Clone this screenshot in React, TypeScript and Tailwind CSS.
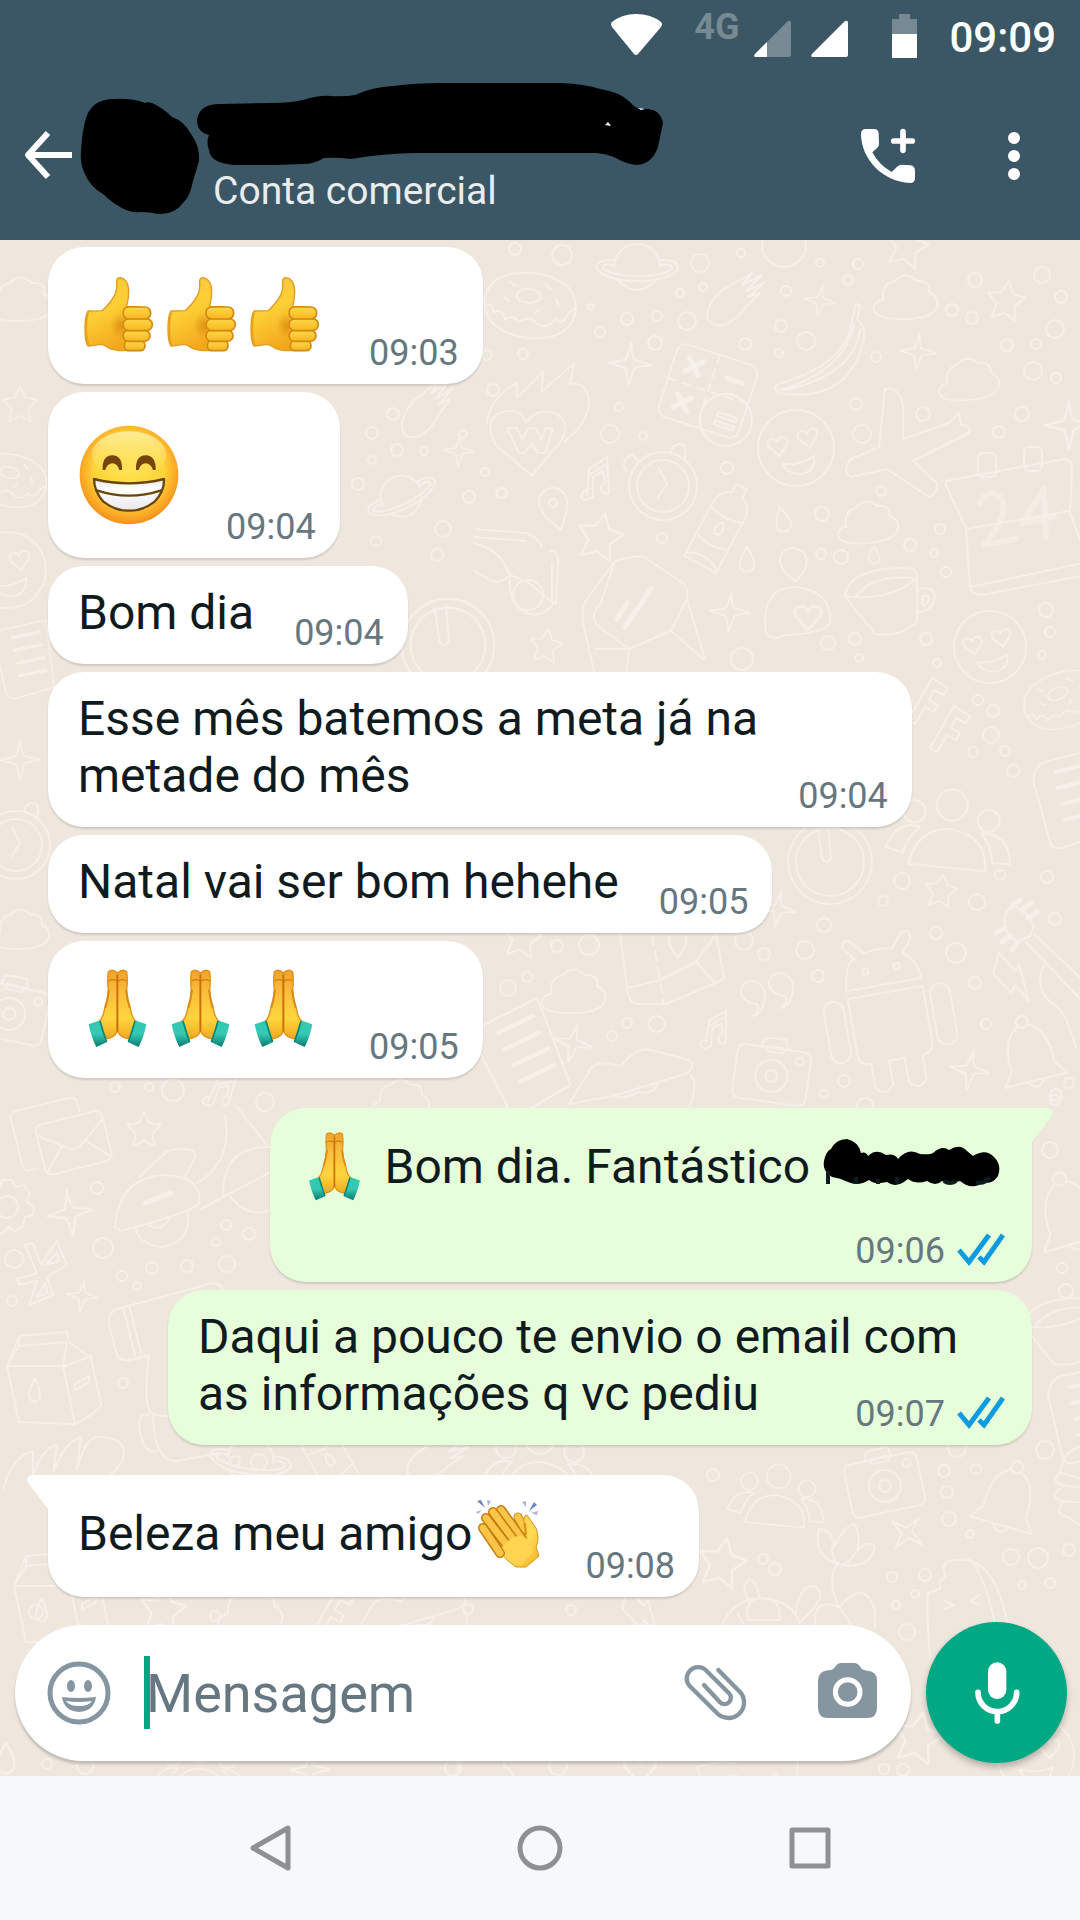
import type { ReactNode } from "react";

type Doodle = [kind: string, x: number, y: number, rotation: number, scale: number];

const STAR = "M0 -20 L6 -8 L19 -6 L9 4 L12 18 L0 12 L-12 18 L-9 4 L-19 -6 L-6 -8 Z";
const SPARKLE = "M0 -20 Q2 -4 4 -4 Q16 -2 20 0 Q6 2 4 4 Q2 14 0 20 Q-3 6 -4 4 Q-14 2 -20 0 Q-6 -3 -4 -4 Q-2 -10 0 -20 Z";
const HEART = "M0 10 L-9 0 Q-12 -7 -6 -8 Q-2 -9 0 -4 Q2 -9 6 -8 Q12 -7 9 0 Z";

const SHAPES: Record<string, ReactNode> = {
  star: <path d={STAR} />,
  sparkle: <path d={SPARKLE} />,
  heart: <path d={HEART} />,
  cloud: <path d="M-22 2 Q-24 -14 -10 -17 Q0 -28 12 -17 Q26 -18 24 -6 Q36 0 31 11 Q24 22 -8 21 Q-34 20 -31 8 Q-29 3 -22 2 Z" />,
  planet: (
    <>
      <path d="M-23 -2 A23 23 0 0 1 23 -2 M-20 10 Q0 32 20 10" />
      <path d="M-23 -9 Q-42 -10 -40 0 Q-30 12 0 12 Q32 12 41 0 Q42 -10 23 -9" />
      <path d="M-24 -4 Q-36 -6 -34 0 Q-22 7 0 7 Q26 7 35 0 Q36 -6 24 -4" />
    </>
  ),
  donut: (
    <>
      <path d="M-46 0 Q-44 -32 0 -32 Q44 -30 46 0 Q44 34 0 33 Q-42 30 -46 0 Z" />
      <path d="M-44 4 Q-38 -2 -36 10 Q-28 4 -24 16 Q-16 10 -10 18 Q0 10 8 18 Q18 24 26 12 Q34 20 38 6 L45 0" />
      <ellipse cx="-2" cy="-9" rx="12" ry="7" />
      <path d="M-22 -22 l6 4 M14 -22 l6 5 M26 -8 l2 7 M-26 -6 l5 4 M10 4 l-5 4" />
    </>
  ),
  mitten: <path d="M-30 18 Q-34 4 -14 -12 L14 -28 L4 -16 L24 -26 L8 -10 L26 -18 L10 -4 L22 -8 L8 6 Q-8 26 -20 24 Q-28 23 -30 18 Z" />,
  banana: (
    <>
      <path d="M36 -46 L32 -30 Q28 14 -42 34 Q-48 38 -42 43 Q30 54 44 -12 Q46 -24 37 -30 L40 -45 Z" />
      <path d="M34 -26 Q24 22 -40 40 M40 -20 Q34 24 -34 40" />
    </>
  ),
  flameHeart: (
    <>
      <path d="M0 46 L-38 14 Q-54 -18 -26 -22 Q-12 -24 -6 -10 Q4 -26 24 -20 Q42 -10 30 10 Z" />
      <path d="M-48 -8 Q-44 -36 -16 -52 L-16 -36 L12 -64 L10 -42 L44 -72 L40 -50 Q60 -54 60 -28 Q56 -6 34 10" />
      <path d="M-26 -4 L-16 -4 L-10 8 L-4 -4 L4 -4 L10 8 L14 -4 L22 -4 L14 22 L6 22 L0 12 L-8 22 L-14 22 Z" />
    </>
  ),
  calculator: (
    <>
      <rect x="-42" y="-38" width="84" height="76" rx="9" />
      <path d="M0 -38 v76 M-42 0 h84" strokeDasharray="8 7" />
      <path d="M-28 -26 l14 14 M-14 -26 l-14 14 M-28 12 l14 14 M-14 12 l-14 14 M14 -18 h16" strokeWidth="5" />
      <circle cx="26" cy="22" r="26" />
      <path d="M16 17 h20 v4 h-20 z M16 26 h20 v4 h-20 z" />
    </>
  ),
  smiley: (
    <>
      <circle r="38" />
      <path d={HEART} transform="translate(-18 -2) rotate(-10)" />
      <path d={HEART} transform="translate(12 -10) rotate(-10)" />
      <path d="M-14 16 Q4 18 18 8 Q20 24 4 26 Q-8 26 -14 16 Z" />
    </>
  ),
  plane: (
    <path d="M-20 -56 Q-4 -58 -2 -38 L-2 -6 L44 -22 L54 -32 L56 -20 Q66 -20 64 -12 L8 16 L32 38 Q32 50 24 52 L-18 24 L-54 32 Q-64 26 -54 14 L-26 2 Z" />
  ),
  calendar: (
    <>
      <path d="M-66 -42 L52 -64 Q60 -64 60 -54 L58 -10 L76 38 L74 52 L-30 72 Q-40 72 -42 64 L-46 6 L-66 -38 Z" />
      <path d="M-46 6 L58 -12 M-42 64 L72 40" />
      <rect x="-34" y="-70" width="18" height="24" rx="5" />
      <rect x="12" y="-76" width="18" height="24" rx="5" />
      <path d="M-32 -20 Q-24 -36 -12 -26 Q0 -12 -28 22 L4 16 M34 14 L32 -34 L10 0 L42 -6" strokeWidth="6" opacity="0.6" />
    </>
  ),
  alarm: (
    <>
      <circle r="34" />
      <circle r="26" />
      <path d="M-4 -18 L4 -2 L-5 12 M-36 -14 Q-44 -26 -30 -32 L-24 -24 M8 -34 Q12 -46 22 -40 L22 -28" />
    </>
  ),
  dial: (
    <>
      <circle r="42" />
      <circle r="34" />
      <path d="M-12 -34 L-8 -4 Q-4 4 1 -4 L-2 -36" />
    </>
  ),
  note: (
    <path d="M-8 16 L-6 -10 L12 -22 L14 14 Q8 16 6 10 Q6 4 10 4 L8 -8 L-2 -2 L-2 18 Q-10 24 -14 18 Q-12 10 -8 12 M-6 -4 L10 -14" />
  ),
  pin: (
    <>
      <path d="M8 22 Q-14 6 -14 -6 A14 14 0 0 1 14 -6 Q14 6 8 22 Z" />
      <circle cy="-5" r="4" />
    </>
  ),
  bottle: (
    <>
      <path d="M-18 40 L-18 -22 Q-16 -36 -6 -38 L-6 -48 L6 -48 L6 -38 Q16 -36 18 -22 L18 40 Z M-18 -16 Q0 -10 18 -16 M-18 14 Q0 22 18 14 M-18 36 Q0 26 18 38" />
      <path d="M0 -8 Q-8 4 0 6 Q8 4 0 -8 Z" />
    </>
  ),
  drop: <path d="M0 -14 Q-10 2 -6 8 Q0 14 6 8 Q10 2 0 -14 Z" />,
  glasses: (
    <>
      <path d="M-44 -44 L8 -40 Q20 -36 24 -26 M-44 -36 L8 -32 M32 -22 Q40 -24 40 -10 L38 30 L34 30 L34 -10" />
      <path d="M-44 -30 Q-18 -24 -8 2 Q-14 10 -26 8 L-44 -2 M-8 2 L8 8 L36 30 Q24 46 8 40 Q-10 30 -8 6" />
      <circle cx="10" cy="22" r="15" />
    </>
  ),
  letter: (
    <>
      <path d="M-26 -54 Q0 -62 6 -56 L42 -32 Q48 -26 46 -16 L30 16 L6 26 L-12 34 L-44 10 Q-52 0 -40 -12 Z" />
      <path d="M-26 -54 L-54 -16 Q-60 -8 -58 8 L-44 70 M-46 34 L-12 34 M46 -16 L64 44 M30 16 L62 44 M-12 34 L-16 70" />
      <path d="M-16 12 L10 -26 M-24 4 L-14 -12" strokeWidth="5" />
    </>
  ),
  hug: (
    <>
      <path d="M0 -26 Q-22 -40 -14 -54 Q-4 -64 8 -54 Q16 -42 0 -26 Z" />
      <path d="M-30 26 Q-36 -20 0 -20 Q36 -16 34 16 Q30 26 -10 28 Q-26 34 -30 26 Z" />
      <path d={HEART} transform="translate(12 10) scale(1.3)" />
    </>
  ),
  cup: (
    <>
      <path d="M-44 -4 Q-40 -32 14 -32 Q28 -32 28 -24 L28 22 Q10 38 -14 34 Z M-44 -4 Q0 2 28 -22 M-34 -2 Q-18 -26 24 -22" />
      <path d="M28 -10 Q44 -16 46 -4 Q44 12 28 12 M34 -4 Q40 -6 40 -1 Q38 6 33 5 Z" />
    </>
  ),
  type: <path d="M-16 20 L8 -22 L24 -12 L20 -5 L10 -10 L5 0 L14 5 L10 12 L1 7 L-9 24 Z" />,
  people: (
    <>
      <circle cy="-30" r="14" />
      <circle cx="-34" cy="-22" r="10" />
      <circle cx="34" cy="-18" r="10" />
      <path d="M-36 26 Q-30 -8 0 -8 Q34 -4 34 28 Z M-42 16 L-58 12 Q-48 -14 -28 -8 Q-38 0 -42 16 M40 20 L56 20 Q54 -8 28 -6 Q38 4 40 20" />
    </>
  ),
  book: (
    <>
      <path d="M-14 -38 L40 -50 L50 34 L2 48 Q-8 50 -10 40 L-24 -20 Q-22 -34 -14 -38 Z" />
      <path d="M-2 -28 l34 -7 M0 -12 l34 -7 M4 4 l34 -7 M6 20 l34 -7" strokeWidth="4" />
    </>
  ),
  map: (
    <>
      <path d="M-54 -36 L-46 24 Q-44 34 -36 34 L-8 34 L44 12 L50 8 L42 -36 M-46 18 L-14 10 L22 -8 L42 -36 M22 -8 L40 12" />
      <path d="M-22 -34 L-10 32" strokeDasharray="10 6" />
      <path d="M4 -12 Q-8 -26 -4 -34 M4 -12 Q14 -26 12 -34" />
    </>
  ),
  quote: <path d="M0 16 Q8 10 4 4 Q-12 2 -12 -10 Q-8 -22 4 -18 Q16 -10 10 6 Q8 14 0 16 Z" />,
  camera: (
    <>
      <rect x="-37" y="-24" width="74" height="54" rx="7" />
      <path d="M-14 -24 L-12 -32 Q-10 -34 10 -34 L13 -24" />
      <rect x="-9" y="-25" width="18" height="5" rx="2" />
      <circle cy="4" r="16" />
      <circle cy="4" r="6" />
      <circle cx="26" cy="-14" r="4" />
    </>
  ),
  lips: <path d="M-62 26 L-40 -10 Q-34 -18 -10 -12 Q6 -32 20 -28 L58 -18 Q66 -12 54 -4 L-18 18 Z M-18 16 Q-12 24 8 14 Q22 18 28 4 M60 -2 Q68 4 58 30" />,
  android: (
    <>
      <path d="M-38 -42 Q-34 -72 -24 -72 L-34 -84 Q-34 -94 -26 -90 L-14 -76 Q0 -80 14 -76 L26 -90 Q36 -94 34 -82 L24 -70 Q38 -60 38 -42 Z" />
      <path d="M-38 -34 H38 V24 Q36 34 26 34 V58 Q18 70 8 58 V34 H-8 V58 Q-18 70 -26 58 V34 Q-38 34 -38 24 Z" />
      <rect x="-64" y="-34" width="20" height="62" rx="10" />
      <rect x="44" y="-34" width="20" height="62" rx="10" />
      <circle cx="-16" cy="-58" r="3" />
      <circle cx="16" cy="-58" r="3" />
    </>
  ),
  bolt: <path d="M-12 -24 L4 -6 L8 -12 L18 24 L4 8 L0 16 L-18 -4 Z" />,
  guitar: (
    <>
      <path d="M-30 -28 Q-36 -8 -18 2 L-6 -4 L-2 -14 Q-8 -28 -22 -34 Z M-10 2 L70 86 M-2 -6 L70 62 M8 26 Q-4 50 20 66 Q32 76 40 108" />
      <path d="M-24 -34 l8 -6 M-14 -30 l9 -7 M-8 -22 l9 -6 M-32 -12 l-8 5 M-26 -4 l-8 6 M-18 2 l-6 8" strokeWidth="5" />
    </>
  ),
  bell: (
    <>
      <circle cy="-34" r="6" />
      <path d="M-6 -30 Q-24 -20 -22 12 L-32 26 L32 26 L22 12 Q24 -20 6 -30 M-8 27 Q0 38 8 27" />
    </>
  ),
  mail: (
    <>
      <rect x="-36" y="-24" width="72" height="54" rx="7" />
      <path d="M-36 -14 L-6 8 Q0 11 6 8 L36 -14 M-34 26 L-13 4 M34 26 L13 4" />
      <path d="M-42 20 L-52 20 Q-58 20 -58 12 L-58 -38 Q-58 -44 -50 -44 L6 -44 Q14 -44 14 -36 L14 -28" />
    </>
  ),
  gear: (
    <>
      <circle r="11" />
      <path d="M-5 -27 H5 L8 -20 L17 -22 L23 -13 L19 -6 L27 0 L26 8 L18 10 L16 19 L8 25 L2 20 L-5 27 L-14 23 L-15 14 L-24 10 L-26 0 L-19 -6 L-22 -15 L-14 -21 L-8 -18 Z" />
    </>
  ),
  scooter: (
    <>
      <path d="M-42 30 Q-38 -20 8 -22 Q46 -20 42 6 Q38 14 -36 34 Z M-18 -20 L10 -46 Q40 -52 38 -40 L28 -20 M40 -14 Q76 -34 68 -82 M80 -90 L110 -52 M44 12 L66 0 Q64 -50 112 -50 M66 0 L112 -24" />
      <path d="M-22 31 A26 26 0 0 0 30 14 M-8 28 Q4 36 14 20 M74 0 Q88 20 112 14" />
      <path d="M-12 6 L14 -4" strokeWidth="5" />
    </>
  ),
  blades: <path d="M-10 -30 L-2 -8 L14 -32 L24 -8 L4 4 L10 22 L-14 32 L-6 8 L-24 12 L-26 6 L-6 0 L-18 -28 Z M2 -8 L14 -20 L16 -12 Z M-6 24 L2 10 L4 20 Z" />,
  milk: (
    <>
      <path d="M-34 -44 L14 -48 L16 -38 L38 -22 L48 24 Q46 32 22 44 L-34 42 L-46 -14 Z M-34 -44 L-34 -34 L14 -38 M-34 -34 L-46 -14 L12 -14 L38 -24 M14 -38 L10 -14 L22 44" />
      <path d="M-18 -2 Q-30 20 -18 22 Q-8 20 -18 -2 Z M22 4 L36 -4 L36 2 L22 10 Z" />
    </>
  ),
  bread: <path d="M-60 34 Q-50 0 -30 -4 L-30 20 Q-20 -8 -6 -10 L-10 18 Q2 -14 18 -18 L14 14 Q22 -16 34 -18 Q66 -18 60 4 Q50 24 20 34" />,
  cart: (
    <path d="M-24 -8 Q-26 -20 -16 -24 L80 -50 Q92 -48 90 -38 M-24 -8 L-16 22 Q-12 30 2 26 L16 22 M-10 -26 L2 22 M-4 -28 L8 20 M16 22 Q8 84 24 82 L40 84 M16 82 Q2 78 8 104 Q12 120 24 118 M20 84 Q22 130 44 128 L86 120" />
  ),
  plant: (
    <path d="M-4 30 Q-18 0 -4 -14 Q-30 -18 -24 -48 Q-12 -48 -8 -32 Q4 -54 12 -52 Q18 -40 14 -26 Q26 -38 32 -30 Q28 -8 -2 -12 M-6 -12 Q-16 -30 -6 -34 M14 -26 Q6 -14 -2 -12 M-4 30 Q-30 20 -28 48 M-4 30 Q22 0 32 34 L32 50 M-4 30 L10 50" />
  ),
  turtle: (
    <path d="M-40 28 Q-36 -6 0 -10 Q40 -8 42 28 M-22 6 L-10 28 M0 -10 Q-16 -8 -12 12 L20 12 Q20 -4 12 -8 M-12 -8 L-16 -20 Q-10 -36 -4 -22 L0 -10 M36 6 Q38 -22 54 -22 Q68 -14 50 4 L40 14" />
  ),
  popsicle: (
    <path d="M-40 60 Q-44 10 -42 -4 L-30 -8 Q-32 -18 -24 -20 Q-30 -34 -20 -36 Q24 -48 38 30 M-4 -38 Q10 -38 26 30 M-26 4 L-16 8 L-26 12 M10 -2 L0 4 L10 8" />
  ),
  burger: (
    <path d="M30 -44 Q-10 -40 -12 -12 L20 -4 M-12 -12 Q-22 -4 -10 0 L20 4 M-12 4 Q-24 12 -10 16 L20 18 M-10 18 Q-18 30 -4 32 L16 46" />
  ),
};

const DOODLES: Doodle[] = [
  ["planet", 637, 269, 0, 1], ["donut", 530, 305, 4, 1], ["mitten", 738, 301, 0, 1], ["sparkle", 820, 301, 10, 0.8],
  ["sparkle", 630, 364, 4, 1.05], ["sparkle", 918, 352, 5, 0.9], ["banana", 820, 350, 0, 1], ["cloud", 905, 298, 0, 1],
  ["cloud", 968, 380, -4, 0.95], ["cloud", 867, 523, -4, 0.95], ["star", 1006, 301, 8, 1], ["star", 907, 246, 14, 1.1],
  ["star", 600, 537, 12, 1.2], ["star", 546, 646, 8, 0.85], ["flameHeart", 532, 432, 0, 0.95], ["calculator", 708, 391, 18, 1],
  ["smiley", 796, 448, 0, 1], ["smiley", 990, 647, 0, 0.95], ["plane", 905, 445, 0, 1], ["calendar", 1012, 523, 0, 1],
  ["alarm", 663, 486, 0, 1], ["note", 595, 479, 0, 1], ["pin", 553, 508, 0, 1], ["bottle", 719, 529, 28, 1],
  ["drop", 783, 521, -14, 1], ["drop", 747, 561, 0, 1], ["drop", 874, 556, 0, 0.7], ["glasses", 518, 573, 0, 1],
  ["letter", 641, 615, 0, 1], ["sparkle", 730, 612, 4, 1], ["hug", 796, 607, 0, 1], ["cup", 889, 600, 0, 1],
  ["type", 924, 700, 0, 1], ["type", 946, 728, 0, 1], ["donut", 1062, 700, -22, 0.85], ["sparkle", 1069, 425, 0, 1.2],
  ["people", 950, 838, 4, 1.1], ["book", 1058, 800, -2, 1], ["dial", 830, 862, 0, 1], ["star", 941, 891, 8, 0.85],
  ["cloud", 573, 992, 0, 1], ["map", 674, 970, 0, 1], ["quote", 753, 1000, 0, 1], ["quote", 781, 992, 0, 1],
  ["note", 714, 1030, 4, 0.9], ["camera", 772, 1072, 8, 1], ["lips", 631, 1078, 0, 1], ["android", 891, 1026, -10, 1],
  ["bolt", 1011, 977, 0, 1], ["guitar", 1036, 940, 0, 1], ["bell", 1030, 1055, -14, 1], ["sparkle", 573, 1043, 14, 1],
  ["sparkle", 970, 1070, 10, 1], ["sparkle", 778, 909, 10, 0.9], ["mail", 73, 1140, -14, 0.95], ["star", 144, 1130, 0, 0.9],
  ["gear", 7, 1207, 0, 1], ["sparkle", 70, 1213, -8, 1.15], ["sparkle", 82, 1296, 8, 0.8], ["scooter", 157, 1197, 0, 1],
  ["blades", 43, 1273, 0, 1], ["milk", 53, 1380, 0, 1], ["bread", 63, 1455, 0, 1], ["cart", 133, 1333, 0, 1],
  ["people", 777, 1502, 4, 0.85], ["camera", 884, 1482, -12, 1], ["bell", 1008, 1500, 16, 1], ["sparkle", 907, 1533, 38, 0.95],
  ["star", 722, 1563, 12, 1.25], ["plant", 843, 1577, 0, 1], ["turtle", 760, 1608, 0, 1], ["popsicle", 970, 1597, 0, 1],
  ["burger", 1072, 1485, 0, 1], ["bell", 1070, 1215, -16, 1.1], ["cup", 1068, 1330, 0, 1], ["book", 1072, 1415, 0, 1],
  ["mitten", 430, 410, -10, 1], ["planet", 402, 498, -26, 0.9], ["sparkle", 459, 451, 4, 0.8],
  ["dial", 448, 645, 0, 1.1], ["cloud", 20, 300, 0, 1], ["star", 20, 405, 0, 0.9],
  ["donut", 10, 480, 10, 0.8], ["smiley", 8, 570, 0, 1], ["book", 14, 660, 0, 0.8], ["sparkle", 20, 760, 0, 1],
  ["alarm", 16, 845, 0, 1], ["cloud", 20, 930, 0, 0.9], ["camera", 10, 1010, 12, 1], ["book", 508, 1062, -14, 1.1],
  ["star", 522, 938, 10, 1], ["bottle", 330, 1460, -30, 1], ["mitten", 440, 1460, 10, 1], ["people", 540, 1470, 0, 1],
  ["planet", 250, 1462, 8, 1], ["star", 163, 1610, 8, 1.2], ["cloud", 250, 1612, 0, 1], ["type", 330, 1610, 0, 1],
  ["lips", 410, 1612, 0, 0.9], ["bolt", 640, 1612, 0, 1], ["milk", 60, 1600, 0, 1], ["star", 918, 1738, 12, 1.3],
  ["smiley", 1036, 1756, 10, 1], ["people", 200, 1775, 0, 0.8], ["sparkle", 310, 1770, 0, 1], ["heart", 640, 1768, 0, 1.6],
  ["calendar", 750, 1800, 0, 0.8], ["cloud", 480, 1772, 0, 1], ["drop", 6, 1760, 0, 1.2], ["cloud", 400, 1100, 0, 0.9],
  ["note", 220, 1090, 20, 0.9],
];

const DOTS: [number, number, number][] = [
  [515, 249, 6], [562, 255, 10], [700, 263, 9], [741, 253, 4], [784, 245, 22], [820, 263, 4], [858, 264, 5], [848, 280, 5],
  [680, 293, 4], [703, 287, 4], [786, 291, 5], [591, 307, 3], [627, 319, 6], [657, 316, 5], [687, 321, 9], [600, 332, 5],
  [655, 343, 7], [745, 344, 6], [781, 326, 6], [806, 341, 9], [779, 353, 4], [952, 310, 6], [972, 318, 6], [975, 280, 7],
  [1042, 275, 8], [1061, 297, 6], [1055, 329, 9], [1007, 345, 6], [1036, 344, 5], [1033, 371, 9], [1056, 378, 5], [876, 357, 5],
  [523, 354, 5], [619, 407, 4], [610, 434, 9], [643, 436, 4], [727, 468, 6], [856, 404, 6], [862, 434, 9], [923, 414, 7],
  [1022, 414, 7], [999, 432, 6], [502, 493, 5], [662, 538, 5], [822, 514, 7], [881, 491, 5], [940, 529, 5], [910, 545, 6],
  [821, 554, 5], [841, 557, 7], [934, 553, 4], [946, 572, 5], [828, 643, 7], [855, 639, 6], [859, 658, 4], [926, 639, 6],
  [937, 663, 4], [1046, 610, 7], [1050, 632, 5], [1042, 655, 4], [742, 659, 11], [978, 700, 5], [993, 711, 6], [991, 735, 8],
  [973, 752, 5], [1005, 751, 5], [1013, 771, 6], [902, 881, 8], [883, 901, 5], [977, 902, 8], [1000, 875, 5], [1047, 877, 6],
  [1055, 919, 6], [824, 925, 7], [805, 950, 9], [818, 976, 6], [744, 941, 9], [764, 954, 6], [936, 933, 6], [956, 953, 10],
  [975, 983, 6], [589, 945, 10], [557, 946, 6], [612, 1036, 5], [627, 1023, 5], [657, 1024, 8], [986, 1024, 5], [824, 1094, 4],
  [844, 1081, 6], [865, 1106, 8], [1056, 1095, 6], [1069, 1083, 5], [508, 988, 8], [527, 977, 5], [115, 1087, 5], [149, 1087, 4],
  [173, 1090, 11], [265, 1102, 9], [97, 1188, 6], [103, 1248, 10], [14, 1259, 9], [12, 1301, 5], [122, 1276, 5], [137, 1286, 4],
  [152, 1268, 6], [187, 1266, 6], [227, 1264, 8], [216, 1242, 4], [226, 1225, 5], [249, 1234, 6], [123, 1383, 5], [235, 1461, 5],
  [259, 1462, 8], [1055, 1100, 5], [1050, 1150, 8], [1062, 1268, 5], [1066, 1291, 7], [957, 1448, 9], [1045, 1450, 9], [944, 1471, 6],
  [976, 1469, 5], [947, 1492, 6], [949, 1519, 7], [970, 1534, 4], [1011, 1557, 8], [1038, 1558, 10], [1069, 1550, 6], [1050, 1583, 5],
  [1022, 1585, 4], [925, 1575, 6], [892, 1577, 5], [915, 1594, 4], [896, 1605, 4], [907, 1632, 8], [763, 1559, 5], [775, 1569, 6],
  [713, 1475, 6], [36, 1612, 7], [215, 1616, 5], [468, 1609, 5], [571, 1610, 5], [47, 1764, 5], [85, 1766, 8], [884, 1769, 5],
  [903, 1770, 6], [558, 1766, 9], [453, 1768, 8], [393, 414, 6], [372, 433, 6], [463, 434, 4], [397, 450, 6], [424, 451, 4],
  [372, 460, 4], [485, 472, 4], [358, 484, 6], [469, 497, 6], [501, 493, 5], [443, 529, 8], [376, 541, 5], [437, 555, 6],
  [487, 355, 5], [493, 390, 6],
];

function Wallpaper() {
  return (
    <svg className="absolute inset-0 h-full w-full" viewBox="0 240 1080 1536" preserveAspectRatio="xMinYMin slice" aria-hidden="true">
      <g fill="none" stroke="#f6f0ea" strokeWidth="2" strokeLinejoin="round" strokeLinecap="round">
        {DOODLES.map(([kind, x, y, rotation, scale], i) => (
          <g key={i} transform={`translate(${x} ${y}) rotate(${rotation}) scale(${scale})`}>
            {SHAPES[kind]}
          </g>
        ))}
        {DOTS.map(([cx, cy, r], i) => (
          <circle key={i} cx={cx} cy={cy} r={r} />
        ))}
      </g>
    </svg>
  );
}

function ThumbsUp() {
  return (
    <svg className="size-[83px]" viewBox="105 98 249 249" role="img" aria-label="Polegar para cima">
      <defs>
        <linearGradient id="thumb-skin" x1="0" y1="0" x2="0.4" y2="1">
          <stop offset="0" stopColor="#f8c440" />
          <stop offset="0.5" stopColor="#fdcf36" />
          <stop offset="1" stopColor="#f3a81c" />
        </linearGradient>
        <radialGradient id="thumb-palm" cx="0.5" cy="0.5" r="0.5">
          <stop offset="0" stopColor="#d98a10" stopOpacity="0.75" />
          <stop offset="1" stopColor="#d98a10" stopOpacity="0" />
        </radialGradient>
        <linearGradient id="thumb-finger" x1="0" y1="0" x2="0" y2="1">
          <stop offset="0" stopColor="#ffd848" />
          <stop offset="1" stopColor="#f7b622" />
        </linearGradient>
      </defs>
      <path
        d="M141 212 Q132 226 132 264 Q132 306 141 317 Q162 315 178 312 Q188 312 200 321 Q216 331 250 331 L300 330 L300 200 L257 198 Q264 172 263 148 Q260 116 238 112 Q227 111 227 124 Q229 150 220 166 Q206 192 183 211 Q164 212 141 212 Z"
        fill="url(#thumb-skin)"
        stroke="#e19a25"
        strokeWidth="4"
      />
      <path d="M142 216 Q136 230 136 264 Q136 300 143 313" fill="none" stroke="#e7a11d" strokeWidth="5" />
      <ellipse cx="238" cy="256" rx="30" ry="40" fill="url(#thumb-palm)" />
      <g fill="url(#thumb-finger)" stroke="#d48a12" strokeWidth="5">
        <rect x="250" y="301" width="62" height="30" rx="14" />
        <rect x="246" y="270" width="81" height="33" rx="16" />
        <rect x="246" y="235" width="88" height="36" rx="18" />
        <rect x="246" y="200" width="83" height="36" rx="17" />
      </g>
    </svg>
  );
}

function Grin() {
  return (
    <svg className="size-[106px]" viewBox="110 545 318 318" role="img" aria-label="Rosto sorridente">
      <defs>
        <radialGradient id="grin-face" cx="0.5" cy="0.45" r="0.55">
          <stop offset="0" stopColor="#ffe14a" />
          <stop offset="0.65" stopColor="#fdd43a" />
          <stop offset="0.85" stopColor="#fbab26" />
          <stop offset="1" stopColor="#f4901d" />
        </radialGradient>
        <linearGradient id="grin-shine" x1="0" y1="0" x2="0" y2="1">
          <stop offset="0" stopColor="#fff3b0" stopOpacity="0.8" />
          <stop offset="1" stopColor="#ffe768" stopOpacity="0.1" />
        </linearGradient>
        <linearGradient id="grin-teeth" x1="0" y1="0" x2="0" y2="1">
          <stop offset="0" stopColor="#e3e3ea" />
          <stop offset="0.3" stopColor="#ffffff" />
          <stop offset="1" stopColor="#e8e8ee" />
        </linearGradient>
      </defs>
      <circle cx="269" cy="704" r="148" fill="url(#grin-face)" />
      <ellipse cx="269" cy="643" rx="112" ry="70" fill="url(#grin-shine)" />
      <path d="M190 689 Q188 646 219 645 Q250 646 248 689 L240 689 Q234 669 219 669 Q204 669 198 689 Z" fill="#76450d" />
      <path d="M290 689 Q288 646 319 645 Q350 646 349 689 L341 689 Q334 669 319 669 Q304 669 298 689 Z" fill="#76450d" />
      <path d="M164 716 Q269 742 374 716 Q376 752 346 784 Q310 812 269 811 Q228 812 192 784 Q164 752 164 716 Z" fill="url(#grin-teeth)" stroke="#694608" strokeWidth="7" strokeLinejoin="round" />
      <path d="M172 750 Q269 782 366 750" fill="none" stroke="#694608" strokeWidth="7" />
    </svg>
  );
}

function Pray({ className }: { className: string }) {
  return (
    <svg className={className} viewBox="110 108 249 249" role="img" aria-label="Mãos unidas">
      <defs>
        <linearGradient id="pray-skin" x1="0" y1="0" x2="0" y2="1">
          <stop offset="0" stopColor="#f0a22a" />
          <stop offset="0.35" stopColor="#fbc03b" />
          <stop offset="0.7" stopColor="#ffd53e" />
          <stop offset="1" stopColor="#f2a81e" />
        </linearGradient>
        <linearGradient id="pray-cuff" x1="0" y1="0" x2="0" y2="1">
          <stop offset="0" stopColor="#2fc8b0" />
          <stop offset="0.5" stopColor="#36c9b4" />
          <stop offset="1" stopColor="#067a70" />
        </linearGradient>
      </defs>
      {[1, -1].map((side) => (
        <g key={side} transform={side === 1 ? undefined : "translate(469 0) scale(-1 1)"}>
          <path d="M234 126 Q220 112 207 122 Q203 150 207 176 Q206 204 196 232 Q192 262 176 274 L196 324 Q226 322 234 301 Z" fill="url(#pray-skin)" stroke="#e0901b" strokeWidth="4" />
          <path d="M208 150 Q220 142 233 150" fill="none" stroke="#d07d12" strokeWidth="4" />
          <path d="M209 176 Q206 204 198 230" fill="none" stroke="#db8a18" strokeWidth="6" />
          <path d="M148 280 L179 269 Q190 296 202 334 L171 348 Q155 318 148 280 Z" fill="url(#pray-cuff)" />
          <path d="M182 270 Q190 300 202 333" fill="none" stroke="#05857a" strokeWidth="5" />
        </g>
      ))}
      <path d="M234 132 V302" stroke="#c96f0c" strokeWidth="5" />
    </svg>
  );
}

function Clap() {
  const fingers = ["M29 13 L50 42", "M21 15 L44 46", "M14 21 L38 52", "M11 31 L28 56"];
  return (
    <svg className="size-[73px]" viewBox="0 0 73 73" role="img" aria-label="Palmas">
      <defs>
        <linearGradient id="clap-skin" x1="0" y1="0" x2="1" y2="1">
          <stop offset="0" stopColor="#fbc64a" />
          <stop offset="0.6" stopColor="#ffda55" />
          <stop offset="1" stopColor="#f5b21d" />
        </linearGradient>
      </defs>
      <path d="M46 20 L58 44" stroke="#c9850f" strokeWidth="9" strokeLinecap="round" />
      <path d="M46 20 L58 44" stroke="#fbc64a" strokeWidth="7" strokeLinecap="round" />
      <path d="M24 50 L36 64 L44 70 L54 70 L67 59 L64 50 Q68 42 64 31 L55 18 Q51 18 52 27 L54 37 L40 30 Z" fill="url(#clap-skin)" stroke="#d9921a" strokeWidth="1" />
      {fingers.map((finger) => (
        <g key={finger} strokeLinecap="round">
          <path d={finger} stroke="#c47c0e" strokeWidth="10" />
          <path d={finger} stroke="#fbc548" strokeWidth="7" />
        </g>
      ))}
      <path d="M30 50 Q42 36 52 40 Q62 46 60 56 L50 67 Q42 68 36 61 Z" fill="#ffd450" />
      <path d="M53 26 L54 38" stroke="#d9921a" strokeWidth="2" />
      <g fill="#6f86bd">
        <path d="M5 4 L9 3 L13 11 Z" />
        <path d="M15 3 L19 4 L16 9 Z" opacity="0.6" />
        <path d="M4 15 L10 13 L6 17 Z" opacity="0.6" />
        <path d="M62 5 L65 8 L57 14 Z" />
        <path d="M50 5 L54 4 L54 10 Z" opacity="0.6" />
        <path d="M59 16 L66 14 L65 18 Z" opacity="0.6" />
      </g>
    </svg>
  );
}

function Ticks() {
  return (
    <svg className="h-[42px] w-[48px]" viewBox="0 0 48 42" fill="none" stroke="#0d9be0" strokeWidth="5" aria-label="Lida" role="img">
      <path d="M2 20 L12 32 L32 5 M22 27 L27 32 L46 5" />
    </svg>
  );
}

function Tail({ side }: { side: "left" | "right" }) {
  return side === "right" ? (
    <svg className="absolute top-0 left-full -ml-px h-[34px] w-[23px]" viewBox="0 0 23 34" aria-hidden="true">
      <path d="M0 0 H16 Q25 1 20 9 L1 34 H0 Z" fill="#e6ffda" />
    </svg>
  ) : (
    <svg className="absolute top-0 right-full -mr-px h-[34px] w-[23px]" viewBox="0 0 23 34" aria-hidden="true">
      <path d="M23 0 H7 Q-2 1 3 9 L22 34 H23 Z" fill="#ffffff" />
    </svg>
  );
}

function Time({ value, read }: { value: string; read?: boolean }) {
  const padding = read ? "pr-[27px]" : "pr-6";
  return (
    <span className={`${padding} flex shrink-0 items-center gap-3 pb-2.5 text-[36px] leading-[42px] text-[#677780]`}>
      <time>{value}</time>
      {read && <Ticks />}
    </span>
  );
}

function Received({ time, tail, children }: { time: string; tail?: boolean; children: ReactNode }) {
  const corner = tail ? "rounded-tl-none" : "rounded-tl-[36px]";
  return (
    <article
      className={`${corner} relative flex max-w-[870px] items-end gap-10 self-start rounded-r-[36px] rounded-bl-[36px] bg-white pl-[30px] shadow-[0_2px_2px_rgba(0,0,0,0.13)]`}
    >
      {tail && <Tail side="left" />}
      {children}
      <Time value={time} />
    </article>
  );
}

function Scribble() {
  return (
    <svg className="h-[57px] w-[178px]" viewBox="822 1137 178 57" role="img" aria-label="Nome ocultado">
      <path
        d="M824 1160 Q826 1150 831 1148 Q836 1138 847 1138 Q859 1141 861 1152 Q866 1150 868 1155 Q876 1147 886 1154 Q895 1152 898 1158 Q908 1146 920 1153 Q930 1154 933 1152 Q942 1144 949 1149 Q960 1142 967 1150 L973 1155 Q986 1147 994 1156 Q1002 1164 998 1175 Q992 1184 984 1181 Q972 1190 960 1180 Q948 1184 942 1180 Q936 1186 927 1180 Q916 1184 908 1178 Q896 1188 887 1181 Q874 1184 869 1179 Q858 1186 848 1181 Q840 1177 832 1176 Q822 1170 824 1160 Z"
        fill="#000000"
      />
      <path d="M828 1170 V1183 M856 1176 V1183 M878 1178 V1183 M897 1176 V1183 M944 1180 Q950 1184 956 1180 M976 1181 Q984 1184 990 1176" stroke="#101b20" strokeWidth="4" fill="none" />
    </svg>
  );
}

function StatusBar() {
  return (
    <div className="flex h-[72px] justify-end pr-6 text-white">
      <svg className="mr-[31px] h-[72px] w-[53px]" viewBox="611 0 53 72" aria-label="Wi-Fi" role="img">
        <path d="M637 14 Q652 14 662 22 Q664 24 662 27 L639 54 Q637 56 635 54 L613 27 Q611 24 613 22 Q623 14 637 14 Z" fill="currentColor" />
      </svg>
      <span className="mr-[15px] text-[36px] leading-[54px] font-bold text-[#778993]">4G</span>
      <svg className="mr-5 h-[72px] w-[37px]" viewBox="754 0 37 72" aria-label="Sinal fraco" role="img">
        <path d="M788 21 Q791 20 791 23 V55 Q791 57 789 57 H756 Q753 57 755 54 Z" fill="#778993" />
        <path d="M767 42 V57 H756 Q753 57 755 54 Z" fill="currentColor" />
      </svg>
      <svg className="mr-11 h-[72px] w-[37px]" viewBox="754 0 37 72" aria-label="Sinal forte" role="img">
        <path d="M788 21 Q791 20 791 23 V55 Q791 57 789 57 H756 Q753 57 755 54 Z" fill="currentColor" />
      </svg>
      <svg className="mr-8 h-[72px] w-[25px]" viewBox="0 0 25 72" aria-label="Bateria" role="img">
        <path d="M7 14 H18 V19 H25 V34 H0 V19 H7 Z" fill="#778993" />
        <path d="M0 34 H25 V58 H0 Z" fill="currentColor" />
      </svg>
      <time className="text-[42px] leading-[76px] font-medium">09:09</time>
    </div>
  );
}

function Header() {
  return (
    <header className="bg-[#3b5664]">
      <StatusBar />
      <div className="flex h-[168px] items-center">
        <button type="button" aria-label="Voltar" className="pl-3">
          <svg className="h-[72px] w-[69px]" viewBox="0 0 69 72" fill="none" stroke="#ffffff" strokeWidth="6">
            <path d="M60 35 H17" />
            <path d="M36 13 L16 35 L36 57" strokeLinejoin="round" />
          </svg>
        </button>
        <svg className="h-[115px] w-[116px] overflow-visible" viewBox="81 98 116 115" role="img" aria-label="Foto do contato">
          <path d="M114 98 Q132 97 145 102 Q150 100 156 104 Q164 108 172 116 Q184 120 191 133 Q200 145 199 160 L193 180 Q190 196 183 202 Q174 214 158 213 Q150 211 141 211 Q130 212 122 207 Q112 202 103 193 Q90 186 84 171 Q80 162 81 150 Q82 130 86 117 Q92 98 114 98 Z" fill="#000000" />
        </svg>
        <div className="flex min-w-0 flex-1 flex-col self-start pt-[11px]">
          <svg className="h-[82px] w-[466px]" viewBox="197 83 466 82" role="img" aria-label="Nome do contato">
            <path
              d="M209 135 Q197 132 197 120 Q199 104 220 104 L272 103 Q290 103 303 100 Q320 95 331 96 Q345 97 355 95 Q372 87 393 86 Q416 83 441 83 H561 Q585 84 600 89 Q620 92 630 102 Q636 109 641 109 Q660 107 663 123 L658 147 Q652 164 637 165 Q626 164 616 158 Q608 154 596 153 H413 Q380 154 351 159 Q336 157 324 158 Q314 164 303 164 Q260 166 234 165 Q210 163 209 150 Q206 142 209 135 Z"
              fill="#000000"
            />
            <path d="M608 122 L611 126 L605 125 Z M638 108 L645 109 L641 110 Z" fill="#ffffff" />
          </svg>
          <p className="pt-1 pl-4 text-[39px] leading-[44px] text-[#e9edef]">Conta comercial</p>
        </div>
        <button type="button" aria-label="Ligar">
          <svg className="size-[72px]" viewBox="756 360 216 216" fill="#ffffff">
            <path d="M783 402 Q783 387 798 387 H822 Q835 387 836 400 L837 432 Q837 438 832 443 L817 457 Q837 495 875 516 L893 499 Q898 494 905 494 L931 496 Q945 498 945 512 V535 Q945 549 930 549 C850 545 784 480 783 402 Z" />
            <path d="M909 395 V451 M881 423 H937" stroke="#ffffff" strokeWidth="17" strokeLinecap="round" />
          </svg>
        </button>
        <button type="button" aria-label="Mais opções" className="mr-[30px] ml-[54px]">
          <svg className="size-[72px]" viewBox="0 0 72 72" fill="#ffffff">
            <circle cx="36" cy="18" r="6" />
            <circle cx="36" cy="36" r="6" />
            <circle cx="36" cy="54" r="6" />
          </svg>
        </button>
      </div>
    </header>
  );
}

function Messages() {
  return (
    <div className="relative flex flex-1 flex-col gap-2 px-12 pt-[7px] pb-[25px]">
      <Received time="09:03">
        <div className="-ml-0.5 flex pt-[26px] pr-1 pb-7">
          <ThumbsUp />
          <ThumbsUp />
          <ThumbsUp />
        </div>
      </Received>
      <Received time="09:04">
        <div className="-ml-0.5 py-[30px] pr-1">
          <Grin />
        </div>
      </Received>
      <Received time="09:04">
        <p className="pt-[18px] pb-[23px]">Bom dia</p>
      </Received>
      <Received time="09:04">
        <p className="pt-[18px] pb-[23px]">
          Esse mês batemos a meta já na
          <br />
          metade do mês
        </p>
      </Received>
      <Received time="09:05">
        <p className="pt-[18px] pb-[23px]">Natal vai ser bom hehehe</p>
      </Received>
      <Received time="09:05">
        <div className="-ml-0.5 flex pt-[26px] pr-1 pb-7">
          <Pray className="size-[83px]" />
          <Pray className="size-[83px]" />
          <Pray className="size-[83px]" />
        </div>
      </Received>

      <article className="relative mt-[22px] flex flex-col self-end rounded-b-[36px] rounded-tl-[36px] bg-[#e6ffda] pl-7 shadow-[0_2px_2px_rgba(0,0,0,0.13)]">
        <Tail side="right" />
        <div className="flex items-center pt-[18px] pr-8 pb-[23px]">
          <Pray className="mr-0.5 h-[81px] w-[73px]" />
          <p className="whitespace-pre"> Bom dia. Fantástico </p>
          <Scribble />
        </div>
        <div className="self-end">
          <Time value="09:06" read />
        </div>
      </article>
      <article className="w-fit max-w-[864px] self-end rounded-[36px] bg-[#e6ffda] pl-[30px] shadow-[0_2px_2px_rgba(0,0,0,0.13)]">
        <div className="flow-root pt-[18px] pr-12">
          Daqui a pouco te envio o email com as informações q vc pediu
          <div className="float-right mt-7 -mr-12">
            <Time value="09:07" read />
          </div>
        </div>
      </article>

      <div className="flex flex-col pt-[22px]">
        <Received time="09:08" tail>
          <div className="flex items-center pt-[22px] pb-[27px]">
            <p>Beleza meu amigo</p>
            <Clap />
          </div>
        </Received>
      </div>
    </div>
  );
}

function Composer() {
  return (
    <form className="relative flex items-center gap-[15px] pr-[13px] pb-[13px] pl-[15px]" onSubmit={(e) => e.preventDefault()}>
      <div className="flex h-[136px] min-w-0 flex-1 items-center rounded-full bg-white pr-[34px] pl-8 shadow-[0_3px_3px_rgba(0,0,0,0.2)]">
        <button type="button" aria-label="Emoji">
          <svg className="size-[64px]" viewBox="0 0 64 64">
            <circle cx="32" cy="32" r="29" fill="none" stroke="#8696a0" strokeWidth="5" />
            <ellipse cx="24" cy="25" rx="4" ry="6" fill="#8696a0" />
            <ellipse cx="41" cy="25" rx="4" ry="6" fill="#8696a0" />
            <path d="M15 36 Q32 38 49 36 Q47 50 32 51 Q17 50 15 36 Z" fill="#8696a0" />
            <path d="M19 40 Q32 42 45 40 Q42 45 32 45 Q22 45 19 40 Z" fill="#ffffff" />
          </svg>
        </button>
        <span className="ml-[33px] h-[73px] w-[6px] shrink-0 bg-[#00a884]" aria-hidden="true" />
        <input
          type="text"
          aria-label="Mensagem"
          placeholder="Mensagem"
          className="-ml-1 min-w-0 flex-1 bg-transparent pt-0.5 text-[54px] leading-[64px] outline-none placeholder:text-[#667781]"
        />
        <button type="button" aria-label="Anexar">
          <svg className="size-[66px]" viewBox="248 690 198 198" fill="none" stroke="#8696a0" strokeWidth="13" strokeLinecap="round">
            <path d="M354 720 L421 788 A47 47 0 0 1 355 854 L268 768 A34 34 0 0 1 316 720 L386 790 A19 19 0 0 1 359 817 L311 765" />
          </svg>
        </button>
        <button type="button" aria-label="Câmera" className="ml-[69px]">
          <svg className="h-[66px] w-[59px]" viewBox="654 690 177 198">
            <path d="M684 721 Q698 722 704 712 Q712 699 724 699 H762 Q774 699 782 712 Q788 722 801 722 Q831 723 831 752 V834 Q831 864 801 864 H684 Q654 864 654 834 V752 Q654 724 684 721 Z" fill="#8696a0" />
            <circle cx="743" cy="786" r="37" fill="none" stroke="#ffffff" strokeWidth="15" />
          </svg>
        </button>
      </div>
      <button type="button" aria-label="Gravar áudio" className="flex size-[141px] shrink-0 items-center justify-center rounded-full bg-[#00a884] shadow-[0_4px_6px_rgba(0,0,0,0.25)]">
        <svg className="h-[66px] w-[48px]" viewBox="1118 690 144 198">
          <rect x="1163" y="697" width="55" height="110" rx="27" fill="#ffffff" />
          <path d="M1133 787 A58 58 0 0 0 1249 787 M1191 848 V873" fill="none" stroke="#ffffff" strokeWidth="17" strokeLinecap="round" />
        </svg>
      </button>
    </form>
  );
}

function NavBar() {
  return (
    <nav className="grid h-36 grid-cols-3 place-items-center bg-[#f7f8fa] px-[12.5%]" aria-label="Sistema">
      <button type="button" aria-label="Voltar">
        <svg className="size-12" viewBox="0 0 48 48" fill="none" stroke="#8e9092" strokeWidth="5" strokeLinejoin="round">
          <path d="M42 4 V44 L7 24 Z" />
        </svg>
      </button>
      <button type="button" aria-label="Início">
        <svg className="size-12" viewBox="0 0 48 48" fill="none" stroke="#8e9092" strokeWidth="5">
          <circle cx="24" cy="24" r="20" />
        </svg>
      </button>
      <button type="button" aria-label="Recentes">
        <svg className="size-12" viewBox="0 0 48 48" fill="none" stroke="#8e9092" strokeWidth="5" strokeLinejoin="round">
          <rect x="6" y="6" width="36" height="36" />
        </svg>
      </button>
    </nav>
  );
}

export default function App() {
  return (
    <div className="flex min-h-screen flex-col font-[Roboto,sans-serif] text-[48px] leading-[57px] text-[#101b20]">
      <Header />
      <main className="relative flex flex-1 flex-col overflow-hidden bg-[#efe7de]">
        <Wallpaper />
        <Messages />
        <Composer />
      </main>
      <NavBar />
    </div>
  );
}
